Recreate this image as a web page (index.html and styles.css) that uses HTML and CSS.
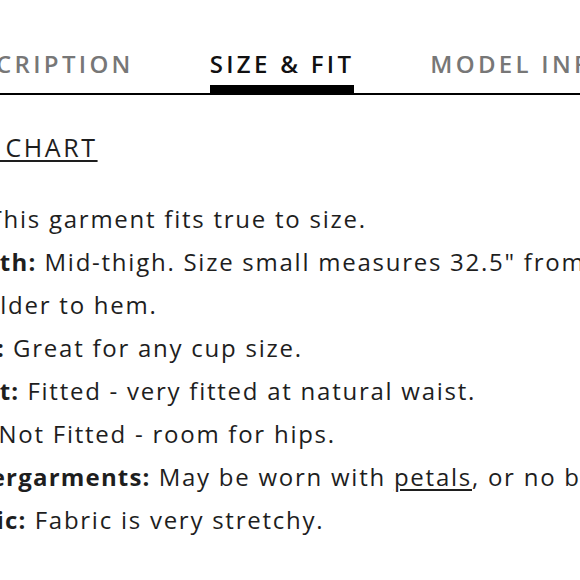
FILE: index.html
```html
<!DOCTYPE html>
<html>
<head>
<meta charset="utf-8">
<link rel="stylesheet" href="styles.css">
</head>
<body>
<div class="page">
  <nav class="tabs">
    <div class="tab">DESCRIPTION</div>
    <div class="tab active">SIZE &amp; FIT</div>
    <div class="tab">MODEL INFO</div>
  </nav>
  <div class="content">
    <p class="chart"><a href="#">SIZE CHART</a></p>
    <ul class="specs">
      <li><b>Fit:</b> This garment fits true to size.</li>
      <li><b>Length:</b> Mid-thigh. Size small measures 32.5" from shoulder to hem.</li>
      <li><b>Bust:</b> Great for any cup size.</li>
      <li><b>Waist:</b> Fitted - very fitted at natural waist.</li>
      <li><b>Hip:</b> Not Fitted - room for hips.</li>
      <li><b>Undergarments:</b> May be worn with <a href="#">petals</a>, or no bra.</li>
      <li><b>Fabric:</b> Fabric is very stretchy.</li>
    </ul>
  </div>
</div>
</body>
</html>
```
FILE: styles.css
```css
html, body {
  margin: 0;
  padding: 0;
  background: #fff;
  overflow: hidden;
}
body {
  width: 580px;
  height: 580px;
  font-family: "Open Sans", "Liberation Sans", sans-serif;
  color: #1e1e1e;
}
.page {
  margin-left: -62px;
  width: 760px;
}
.tabs {
  display: flex;
  gap: 76px;
  padding-top: 47px;
  border-bottom: 2px solid #000;
  margin-left: 4px;
  height: 46px;
}
.tab {
  font-size: 24px;
  font-weight: 600;
  letter-spacing: 3.3px;
  color: #777;
  line-height: 34px;
  white-space: nowrap;
  height: 47px;
  box-sizing: border-box;
}
.tab.active {
  color: #111;
  border-bottom: 9px solid #000;
}
.content {
  font-size: 24px;
  letter-spacing: 1.75px;
  line-height: 43px;
  width: 720px;
}
.chart {
  margin: 31px 0 28px -1px;
  font-size: 25px;
  letter-spacing: 2.6px;
}
a {
  color: inherit;
  text-decoration: underline;
  text-underline-offset: 3px;
  text-decoration-thickness: 1.5px;
}
.specs {
  list-style: none;
  margin: 0;
  padding: 0;
}
.specs b {
  font-weight: 700;
  letter-spacing: 1.2px;
}
```
